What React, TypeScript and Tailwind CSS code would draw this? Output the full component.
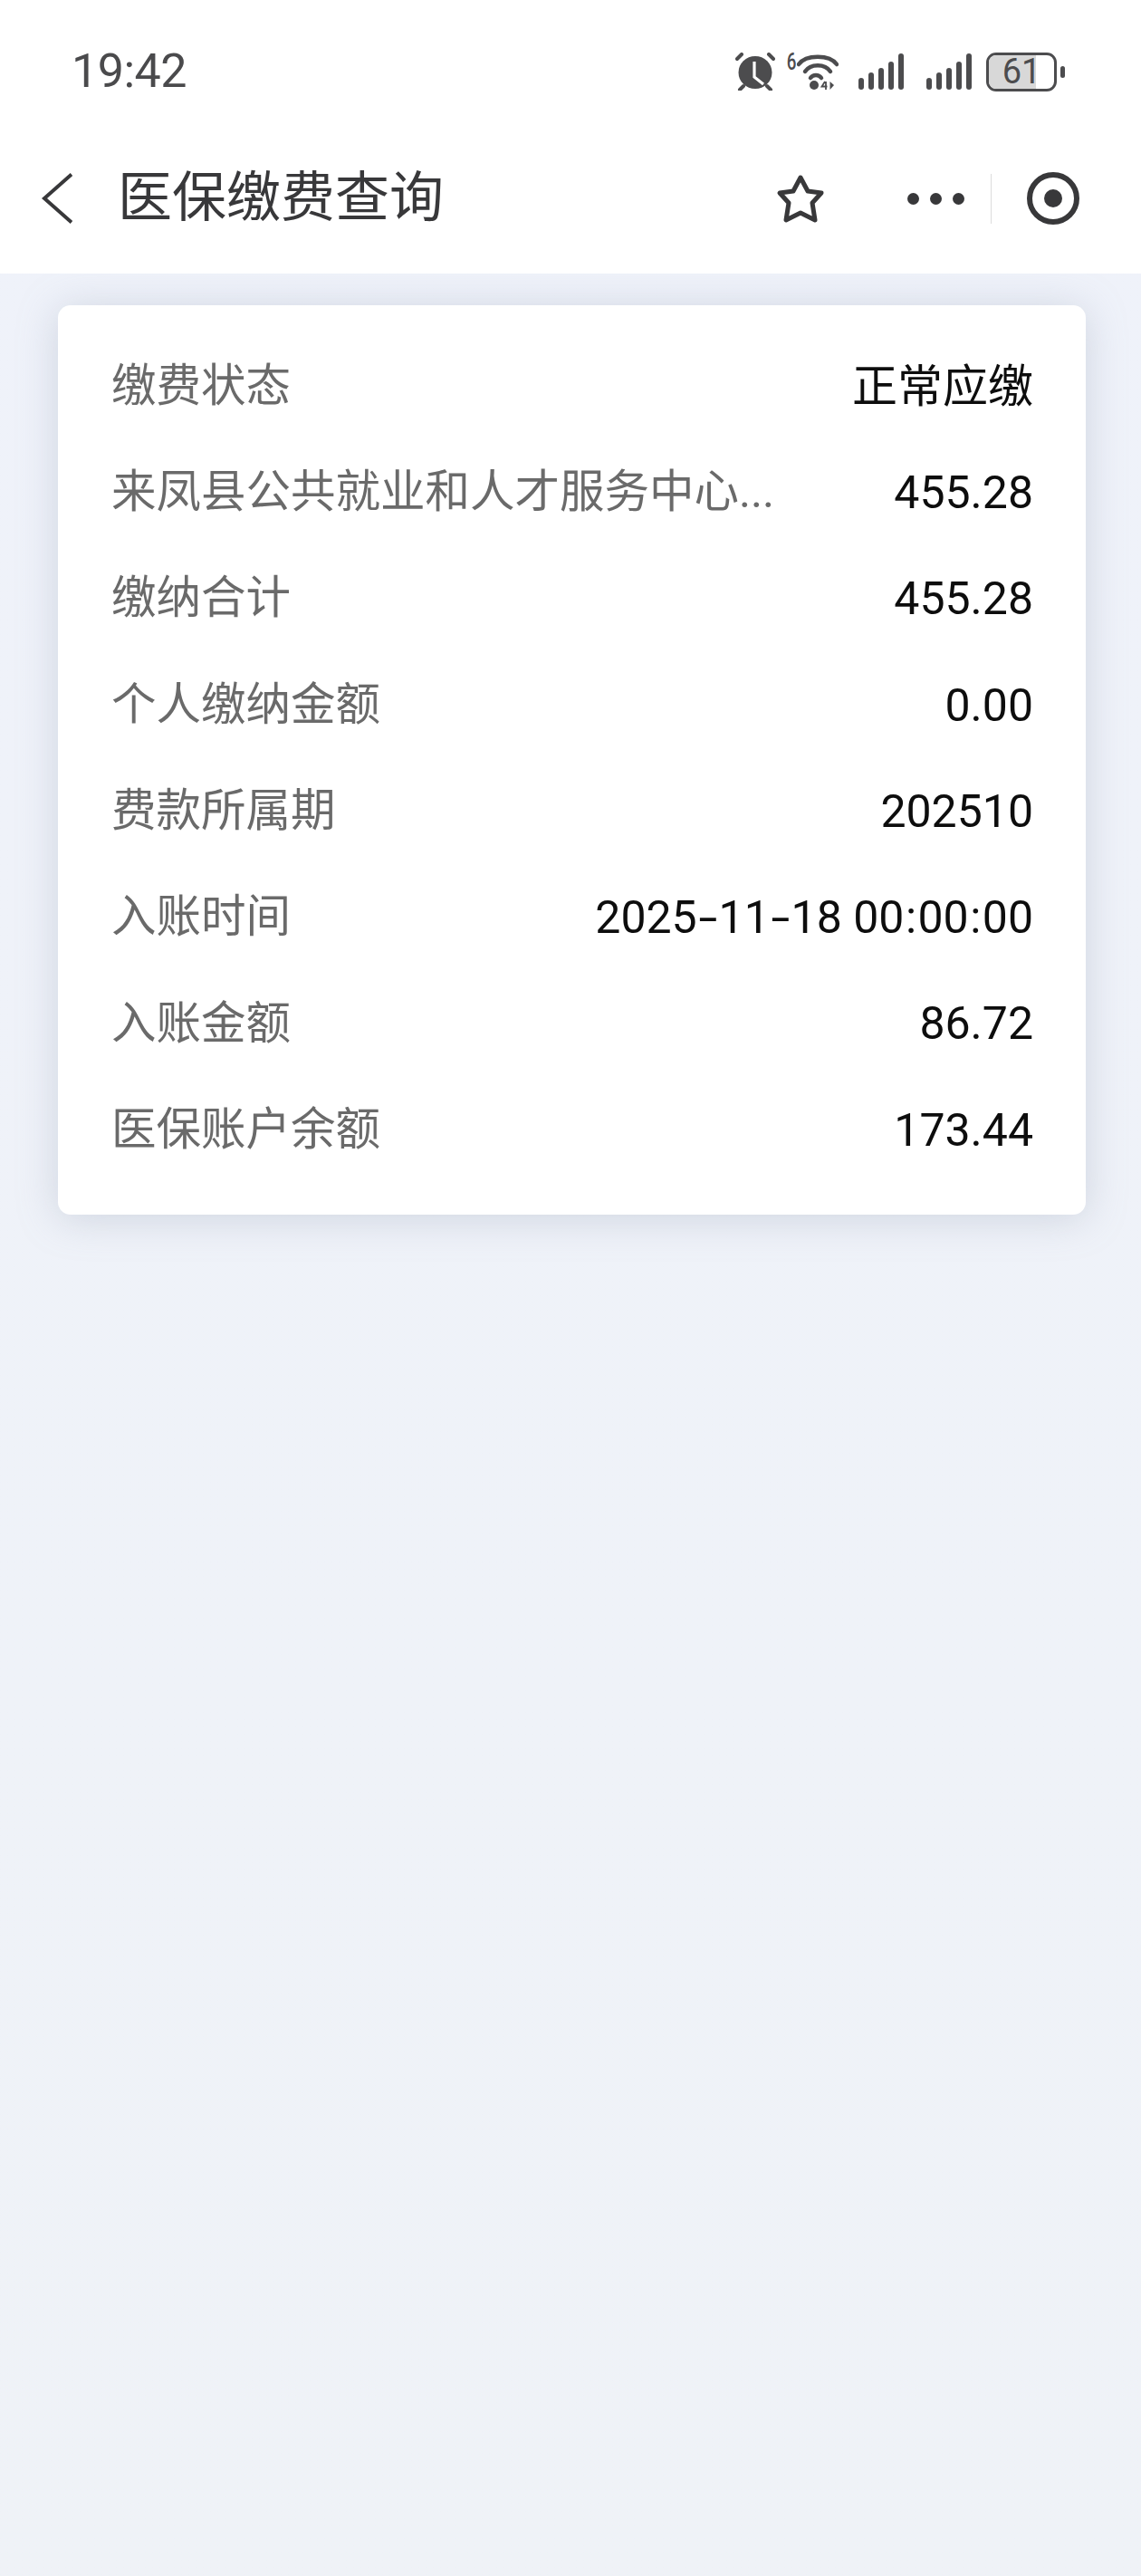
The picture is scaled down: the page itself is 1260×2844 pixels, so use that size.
const rows: [string, string][] = [
  ["缴费状态", "正常应缴"],
  ["来凤县公共就业和人才服务中心...", "455.28"],
  ["缴纳合计", "455.28"],
  ["个人缴纳金额", "0.00"],
  ["费款所属期", "202510"],
  ["入账时间", "2025-11-18 00:00:00"],
  ["入账金额", "86.72"],
  ["医保账户余额", "173.44"],
];

function Value({ text }: { text: string }) {
  const parts = text.split(/([-:])/);
  return (
    <span className="text-[#0d0d0d]">
      {parts.map((p, i) =>
        p === "-" ? (
          <span key={i} className="mx-[5px] inline-block scale-x-150">-</span>
        ) : p === ":" ? (
          <span key={i} className="mx-[1.5px] inline-block">:</span>
        ) : (
          <span key={i}>{p}</span>
        )
      )}
    </span>
  );
}

function Signal() {
  return (
    <svg width="50" height="40" viewBox="0 0 50 40" fill="#4c4c4e">
      <rect x="0" y="27" width="6" height="13" rx="3" />
      <rect x="11" y="21" width="6" height="19" rx="3" />
      <rect x="22" y="16" width="6" height="24" rx="3" />
      <rect x="33" y="9" width="6" height="31" rx="3" />
      <rect x="44" y="0" width="6" height="40" rx="3" />
    </svg>
  );
}

function Alarm() {
  return (
    <svg width="44" height="42" viewBox="0 0 44 42">
      <ellipse cx="22" cy="22" rx="18.5" ry="18" fill="#4c4c4e" />
      <path d="M2 7 L7 2 M42 7 L37 2 M9 37 L5 41 M35 37 L39 41" stroke="#4c4c4e" strokeWidth="4" strokeLinecap="round" fill="none" />
      <path d="M21 10 V27 L31 35" stroke="#fff" strokeWidth="3.2" fill="none" />
    </svg>
  );
}

function Wifi() {
  return (
    <svg width="46" height="40" viewBox="0 0 46 40" fill="none">
      <path d="M2 12 C10 1 36 1 44 12" stroke="#4c4c4e" strokeWidth="4.5" strokeLinecap="round" />
      <path d="M9 20 C15 11 31 11 37 20" stroke="#4c4c4e" strokeWidth="4.5" strokeLinecap="round" />
      <path d="M15 27 C18 23 24 23 27 27" stroke="#4c4c4e" strokeWidth="4.5" strokeLinecap="round" />
      <circle cx="19" cy="35" r="5" fill="#4c4c4e" />
      <path d="M31 31 L27.5 36.5 H33.5 M32 31 V40" stroke="#4c4c4e" strokeWidth="1.8" />
      <path d="M36.5 31 V40 L41 35 Z" fill="#4c4c4e" />
    </svg>
  );
}

function Battery() {
  return (
    <div className="flex items-center gap-[4px]">
      <div className="relative flex h-[43px] w-[78px] items-center justify-center overflow-hidden rounded-[11px] border-[3px] border-[#4c4c4e] bg-white">
        <div className="absolute inset-y-0 left-0 w-[52px] bg-[#d8d8d8]" />
        <span className="relative text-[38px] leading-none text-[#4c4c4e]">61</span>
      </div>
      <div className="h-[13px] w-[5px] rounded-full bg-[#4c4c4e]" />
    </div>
  );
}

export default function App() {
  return (
    <div
      className="flex h-[2844px] w-[1260px] flex-col overflow-hidden bg-linear-to-b from-[#eff2fa] to-[#eff2f7]"
      style={{ fontFamily: 'Roboto, "Noto Sans CJK SC", sans-serif' }}
    >
      <header className="relative z-10 h-[302px] shrink-0 bg-white">
        <div className="flex h-[158px] items-center justify-between pl-[79px] pr-[84px]">
          <span className="text-[52px] leading-none tracking-[-0.5px] text-[#4a4a4c]">19:42</span>
          <div className="flex items-center">
            <Alarm />
            <div className="relative ml-[24px] flex">
              <span className="absolute -left-[13px] -top-[3px] scale-x-75 text-[25px] font-medium leading-none text-[#4c4c4e]">6</span>
              <Wifi />
            </div>
            <div className="ml-[22px]"><Signal /></div>
            <div className="ml-[25px]"><Signal /></div>
            <div className="ml-[16px]"><Battery /></div>
          </div>
        </div>
        <nav className="flex h-[122px] items-center pl-[46px] pr-[68px]">
          <svg width="34" height="56" viewBox="0 0 34 56" fill="none">
            <path d="M33 1.5 L3 28 L33 54.5" stroke="#38383a" strokeWidth="4" />
          </svg>
          <h1 className="ml-[50px] text-[60px] font-normal leading-none text-[#38383a]">医保缴费查询</h1>
          <div className="ml-auto flex items-center">
            <svg width="54" height="57" viewBox="0 0 54 57" fill="none">
              <path d="M27 5 L35 20 L50 22 L40 33 L43 52 L27 44 L11 52 L14 33 L4 22 L19 20 Z" stroke="#38383a" strokeWidth="5" strokeLinejoin="round" />
            </svg>
            <div className="ml-[91px] flex gap-[12px]">
              <span className="h-[13px] w-[13px] rounded-full bg-[#38383a]" />
              <span className="h-[13px] w-[13px] rounded-full bg-[#38383a]" />
              <span className="h-[13px] w-[13px] rounded-full bg-[#38383a]" />
            </div>
            <div className="ml-[29px] h-[55px] w-px bg-[#dcdcdc]" />
            <svg className="ml-[39px]" width="58" height="58" viewBox="0 0 58 58">
              <circle cx="29" cy="29" r="26" fill="none" stroke="#38383a" strokeWidth="6" />
              <circle cx="29" cy="29" r="10" fill="#38383a" />
            </svg>
          </div>
        </nav>
      </header>
      <main className="pl-[64px] pr-[61px] pt-[35px]">
        <section className="rounded-[14px] bg-white pb-[35px] pl-[59px] pr-[58px] pt-[31px] shadow-[0_4px_44px_rgba(145,155,175,0.34)]">
          {rows.map(([label, value], i) => (
            <div key={i} className="flex h-[117.3px] items-center justify-between text-[50px] leading-none">
              <span className="text-[49.5px] text-[#6a6a6a]">{label}</span>
              <Value text={value} />
            </div>
          ))}
        </section>
      </main>
    </div>
  );
}
